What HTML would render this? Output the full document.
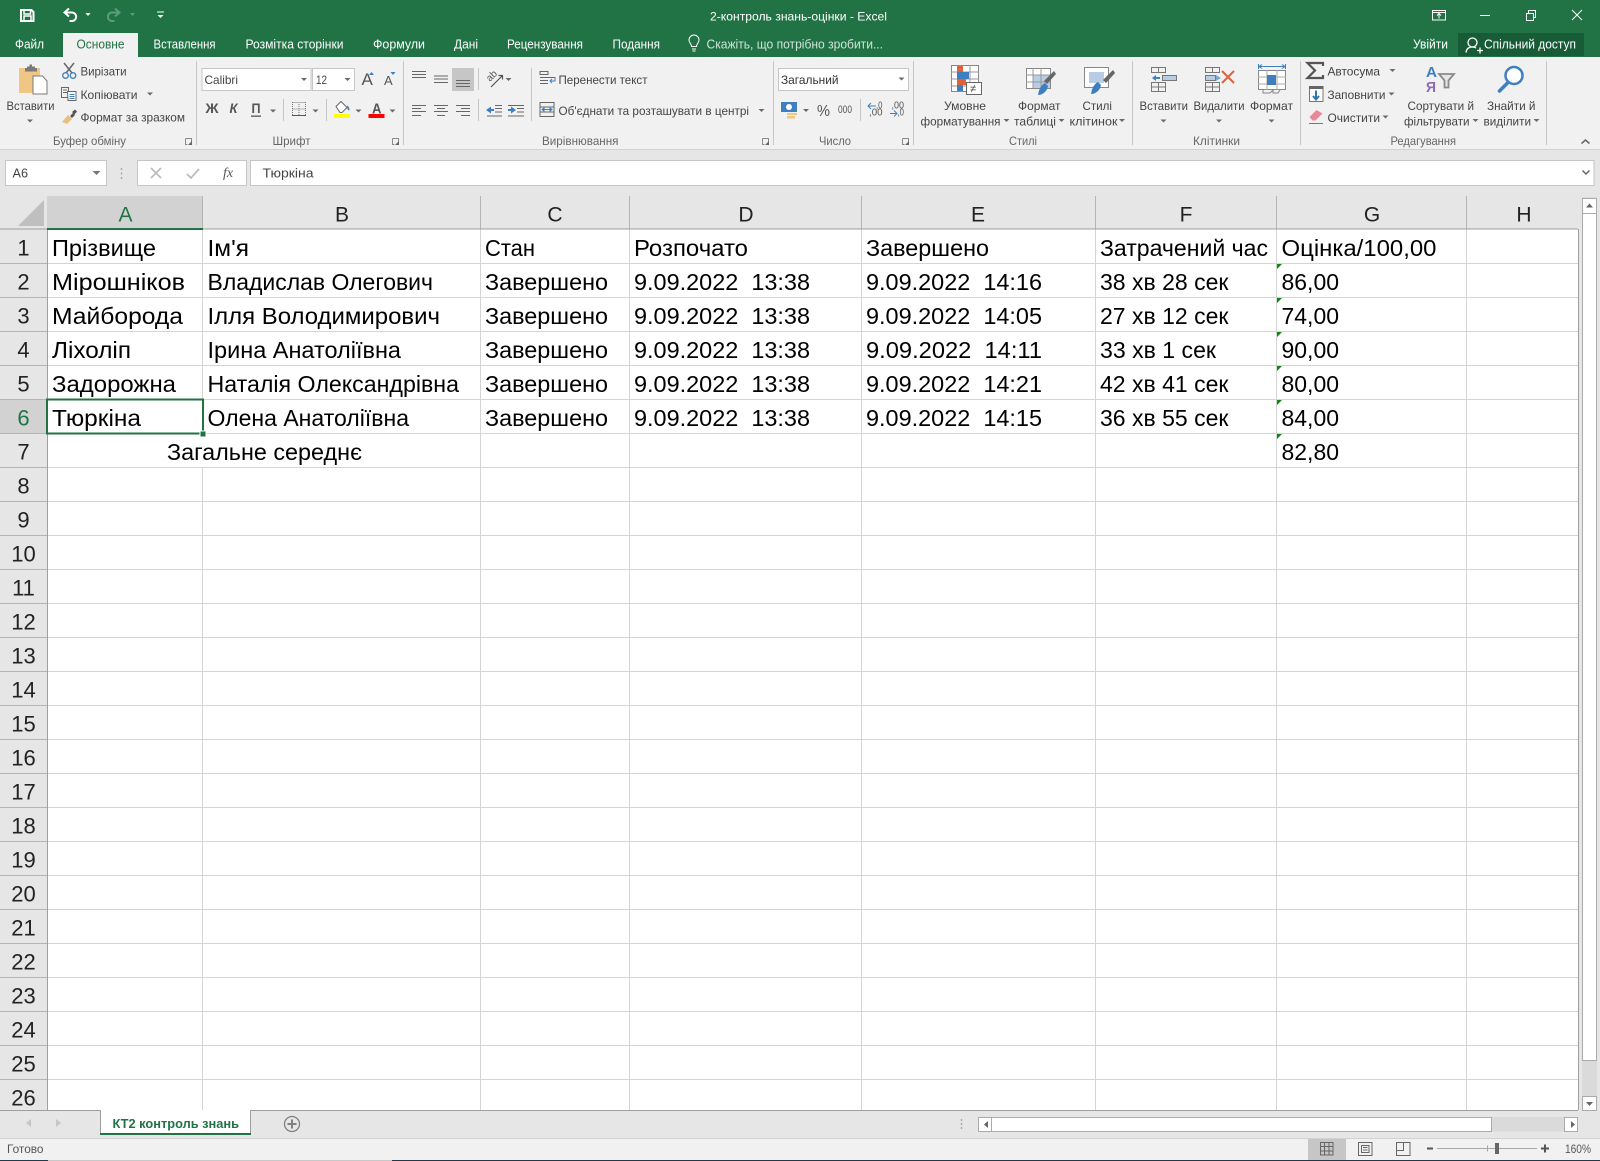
<!DOCTYPE html>
<html lang="uk"><head><meta charset="utf-8"><title>2-контроль знань-оцінки - Excel</title>
<style>
html,body{margin:0;padding:0;background:#fff}
svg{display:block}
text{font-family:"Liberation Sans","DejaVu Sans",sans-serif;font-size:12px;fill:#444}
.t{font-size:12.5px;fill:#fff}
.g{font-size:12px;fill:#666}
.c{font-size:23px;fill:#000}
.h{font-size:21px;fill:#222;text-anchor:middle}
.r{font-size:22px;fill:#222;text-anchor:middle}
</style></head><body>
<svg xmlns="http://www.w3.org/2000/svg" width="1600" height="1161" viewBox="0 0 1600 1161">
<defs><path id="a" d="M-3-1.500h6l-3 3z" fill="#6a6a6a"/><path id="l" d="M0 0h6v6h-2M0 0v6h2" fill="none"/></defs>
<!-- backgrounds -->
<rect width="1600" height="1161" fill="#e6e6e6"/>
<rect width="1600" height="57" fill="#217346"/>
<rect y="57" width="1600" height="92" fill="#f1f1f1"/>
<rect y="149" width="1600" height="1" fill="#d2d2d2"/>
<rect x="63" y="33" width="75" height="24" fill="#f1f1f1"/>
<rect x="1458" y="33" width="126" height="23" fill="#185c37"/>

<!-- quick access -->
<g fill="none" stroke="#fff" stroke-width="2">
<path d="M21 10h10.500l2 2v9h-12.500z"/><path d="M24 10v4h6.500v-4" stroke-width="1.500"/><path d="M24 21v-5h7v5" stroke-width="1.500"/>
<path d="M65 12.500h7.500a4.300 4.300 0 0 1 0 8.500h-3"/><path d="M69 8.500l-4.500 4 4.500 4"/>
<g stroke="#5c9c7b"><path d="M119 12.500h-7.500a4.300 4.300 0 0 0 0 8.500h3"/><path d="M115 8.500l4.500 4-4.500 4"/></g>
<path d="M157 12h7" stroke-width="1"/>
</g>
<path d="M85.500 13h5l-2.500 3z M157.500 15h6l-3 3z" fill="#fff"/><path d="M130 13h5l-2.500 3z" fill="#5c9c7b"/>
<text x="710" y="20.700" textLength="177" lengthAdjust="spacingAndGlyphs" style="fill:#fff">2-контроль знань-оцінки - Excel</text>
<!-- window buttons -->
<g fill="none" stroke="#fff" stroke-width="1">
<path d="M1432.500 10.500h13v9.500h-13zM1432.500 12.500h13M1439 18.500v-4.500M1437 15.500l2-2 2 2"/>
<path d="M1480 15.500h10"/>
<path d="M1526.500 13.500h7v7h-7zM1528.500 13v-2.500h7v7h-2"/>
<path d="M1572 10l10 10M1582 10l-10 10"/>
</g>
<!-- tabs -->
<text class="t" x="15" y="48.500" textLength="29" lengthAdjust="spacingAndGlyphs">Файл</text>
<text class="t" x="76.500" y="48.500" textLength="48" lengthAdjust="spacingAndGlyphs" style="fill:#217346">Основне</text>
<text class="t" x="153.500" y="48.500" textLength="62" lengthAdjust="spacingAndGlyphs">Вставлення</text>
<text class="t" x="245.500" y="48.500" textLength="98" lengthAdjust="spacingAndGlyphs">Розмітка сторінки</text>
<text class="t" x="373" y="48.500" textLength="52" lengthAdjust="spacingAndGlyphs">Формули</text>
<text class="t" x="454" y="48.500" textLength="24" lengthAdjust="spacingAndGlyphs">Дані</text>
<text class="t" x="507" y="48.500" textLength="76" lengthAdjust="spacingAndGlyphs">Рецензування</text>
<text class="t" x="612.500" y="48.500" textLength="47.500" lengthAdjust="spacingAndGlyphs">Подання</text>
<path d="M691.500 46.500c0-3-2.500-3.500-2.500-6.500a5 5 0 0 1 10 0c0 3-2.500 3.500-2.500 6.500zM692 49h4M692.500 51h3" fill="none" stroke="#fff"/>
<text class="t" x="706.500" y="48.500" textLength="176.500" lengthAdjust="spacingAndGlyphs" style="fill:#cfe3d8">Скажіть, що потрібно зробити...</text>
<text class="t" x="1413" y="48.500" textLength="35" lengthAdjust="spacingAndGlyphs">Увійти</text>
<g fill="none" stroke="#fff" stroke-width="1.300"><circle cx="1472.500" cy="42.500" r="4.500"/><path d="M1466 52.500c.5-4 3-5.500 6.500-5.500 1.500 0 2.500.3 3.500 1M1477 50.500h6M1480 47.500v6"/></g>
<text class="t" x="1484" y="48.500" textLength="92" lengthAdjust="spacingAndGlyphs">Спільний доступ</text>

<!-- ribbon separators -->
<path d="M196.500 61v84M403.500 61v84M773.500 61v84M913.500 61v84M1132.500 61v84M1300.500 61v84M1546.500 61v84M531.500 68v53M478.500 68v22M478.500 99v22M283.500 99v22M326.500 99v22M860.500 99v22" stroke="#c6c6c6" fill="none"/>
<!-- group labels -->
<text class="g" x="53" y="145" textLength="73" lengthAdjust="spacingAndGlyphs">Буфер обміну</text>
<text class="g" x="272.500" y="145" textLength="38" lengthAdjust="spacingAndGlyphs">Шрифт</text>
<text class="g" x="542" y="145" textLength="76.500" lengthAdjust="spacingAndGlyphs">Вирівнювання</text>
<text class="g" x="819" y="145" textLength="32" lengthAdjust="spacingAndGlyphs">Число</text>
<text class="g" x="1009" y="145" textLength="28" lengthAdjust="spacingAndGlyphs">Стилі</text>
<text class="g" x="1193" y="145" textLength="47" lengthAdjust="spacingAndGlyphs">Клітинки</text>
<text class="g" x="1390.500" y="145" textLength="65.500" lengthAdjust="spacingAndGlyphs">Редагування</text>
<g stroke="#8a8a8a" stroke-width="1"><use href="#l" x="185.500" y="138.500"/><use href="#l" x="392.500" y="138.500"/><use href="#l" x="762.500" y="138.500"/><use href="#l" x="902.500" y="138.500"/></g>
<path d="M188 145l4-4v4zM395 145l4-4v4zM765 145l4-4v4zM905 145l4-4v4z" fill="#666"/>

<!-- clipboard -->
<path d="M19 68h21v25h-21z" fill="#efc683"/><path d="M27 68v-1.500h2.500v-2h2.500v2h3v1.500h2v3.500h-12v-3.500z" fill="#7a7a7a"/>
<path d="M33 76h9.500l4.500 5v13h-14z" fill="#fff" stroke="#7a7a7a"/>
<text x="6.500" y="110" textLength="48" lengthAdjust="spacingAndGlyphs">Вставити</text><use href="#a" x="30" y="121"/>
<g fill="none"><path d="M64 63l8 10M74 63l-8 10" stroke="#666" stroke-width="1.500"/><circle cx="65.500" cy="75.500" r="2.800" stroke="#3f7fbf" stroke-width="1.300"/><circle cx="73" cy="75.500" r="2.800" stroke="#3f7fbf" stroke-width="1.300"/></g>
<text x="80.500" y="75.500" textLength="46" lengthAdjust="spacingAndGlyphs">Вирізати</text>
<g fill="none" stroke="#666"><path d="M61.500 87.500h7v10h-7zM63 90h4M63 92.500h4"/><path d="M67.500 91.500h8.500v9h-8z" fill="#fff"/><path d="M69.500 94.500h5M69.500 96.500h5M69.500 98.500h5" stroke="#3f7fbf"/></g>
<text x="80.500" y="99" textLength="57" lengthAdjust="spacingAndGlyphs">Копіювати</text><use href="#a" x="150" y="94"/>
<path d="M70 116l3-3 2 2-3 3z M72 112l3-2.500 2 2-2.500 3z" fill="#555"/><path d="M62 122l6-7 4 4-5 5z" fill="#e9bf80"/>
<text x="80.500" y="121.500" textLength="104.500" lengthAdjust="spacingAndGlyphs">Формат за зразком</text>

<!-- font -->
<rect x="202" y="68.500" width="109" height="22" fill="#fff" stroke="#c6c6c6"/><rect x="312.500" y="68.500" width="42" height="22" fill="#fff" stroke="#c6c6c6"/>
<text x="204.500" y="84" textLength="33.500" lengthAdjust="spacingAndGlyphs">Calibri</text><use href="#a" x="304" y="79.500"/>
<text x="316" y="84" textLength="11" lengthAdjust="spacingAndGlyphs">12</text><use href="#a" x="347.500" y="79.500"/>
<text x="361.500" y="85" style="font-size:17px;fill:#555">A</text><path d="M369 75l2.500-3 2.500 3z" fill="#3f7fbf"/>
<text x="384" y="85" style="font-size:13px;fill:#555">A</text><path d="M390.500 72l2.500 3 2.500-3z" fill="#3f7fbf"/>
<text x="205.500" y="113" textLength="13" lengthAdjust="spacingAndGlyphs" style="font-weight:bold;font-size:14px;fill:#555">Ж</text>
<text x="229.500" y="113" textLength="8" lengthAdjust="spacingAndGlyphs" style="font-weight:bold;font-style:italic;font-size:14px;fill:#555">К</text>
<text x="251.500" y="113" textLength="9" lengthAdjust="spacingAndGlyphs" style="font-weight:bold;font-size:14px;fill:#555">П</text><rect x="251" y="115.500" width="10" height="1.300" fill="#555"/>
<use href="#a" x="273" y="111"/><path d="M292.500 102.500h13M292.500 109h13M292.500 115.500h13M292.500 102v13M299 102v13M305.500 102v13" stroke="#777" stroke-dasharray="1 1" fill="none"/><path d="M292 115.500h14" stroke="#555"/><use href="#a" x="315.500" y="111"/>
<path d="M336 106.500l5-5 6 6-5 5h-2z" fill="#fff" stroke="#666"/><path d="M347 105.500c2 1 2.500 3 2.500 5-1.500 0-2.500-1.500-2.500-5z" fill="#3f7fbf"/><rect x="334" y="114" width="16" height="4" fill="#ffff00"/><use href="#a" x="358.500" y="111"/>
<text x="372" y="113.300" textLength="9.500" lengthAdjust="spacingAndGlyphs" style="font-size:15px;font-weight:bold;fill:#555">A</text><rect x="368.500" y="114" width="16" height="4" fill="#ff0000"/><use href="#a" x="392.500" y="111"/>

<!-- alignment -->
<rect x="452" y="68" width="22" height="23" fill="#c6c6c6"/>
<path d="M412 71.500h14M412 74.500h14M412 77.500h14M434 76h14M434 79h14M434 82.500h14M456 80.500h14M456 83.500h14M456 86.500h14
M412 105.500h14M412 108.500h9M412 111.500h14M412 115.500h9M434 105.500h14M437 108.500h8M434 111.500h14M437 115.500h8M456 105.500h14M461 108.500h9M456 111.500h14M461 115.500h9" stroke="#666" fill="none"/>
<text transform="translate(490 82) rotate(-45)" textLength="11" lengthAdjust="spacingAndGlyphs" style="font-size:10px;fill:#555">ab</text><path d="M491 87l11-11M498.500 75.500h4v4" fill="none" stroke="#555" stroke-width="1.200"/><use href="#a" x="508.500" y="79.500"/>
<path d="M495 105.500h7M495 108.500h7M495 112h7M487 116h15M508 105.500h16M517 108.500h7M517 112h7M508 116h16" stroke="#666" fill="none"/><path d="M486 110l5-3.500v2.500h3v2h-3v2.500zM516 110l-5-3.500v2.500h-3v2h3v2.500z" fill="#3f7fbf"/>
<path d="M540 71.500h8v3h-8zM540 77.500h15M540 80.500h8M540 83.500h8" fill="none" stroke="#666"/><path d="M555 77v4h-4M552 79l-2 2 2 2" fill="none" stroke="#3f7fbf"/>
<text x="558.500" y="84" textLength="89" lengthAdjust="spacingAndGlyphs">Перенести текст</text>
<path d="M540 102.500h14v14h-14zM540 107h14M540 112h14" fill="#f1f1f1" stroke="#666"/><path d="M542 109.500h10M542 109.500l2-1.500v3zM552 109.500l-2-1.500v3z" stroke="#3f7fbf" fill="#3f7fbf"/>
<text x="558.500" y="115" textLength="190.500" lengthAdjust="spacingAndGlyphs">Об'єднати та розташувати в центрі</text><use href="#a" x="761.500" y="110.500"/>

<!-- number -->
<rect x="778.500" y="68.500" width="130" height="22" fill="#fff" stroke="#c6c6c6"/>
<text x="781" y="84" textLength="57.500" lengthAdjust="spacingAndGlyphs" style="fill:#333">Загальний</text><use href="#a" x="901.500" y="79"/>
<rect x="781" y="102" width="16" height="10" fill="#3f7fbf"/><circle cx="789" cy="107" r="3" fill="#fff"/><path d="M787 113h10v2h-10zM787 116h8v2.500h-8z" fill="#efc683"/><use href="#a" x="806" y="110.500"/>
<text x="817" y="116" textLength="13" lengthAdjust="spacingAndGlyphs" style="font-size:16px;fill:#555">%</text>
<text x="838" y="113" textLength="14" lengthAdjust="spacingAndGlyphs" style="font-size:11px;fill:#555">000</text>
<text x="876" y="108.300" textLength="6.500" lengthAdjust="spacingAndGlyphs" style="font-size:10.500px;fill:#555">,0</text><text x="869" y="115.700" textLength="13.500" lengthAdjust="spacingAndGlyphs" style="font-size:10.500px;fill:#555">,00</text><path d="M868 106h8M871 103l-3 3 3 3" stroke="#3f7fbf" fill="none"/>
<text x="891.500" y="108.300" textLength="12.500" lengthAdjust="spacingAndGlyphs" style="font-size:10.500px;fill:#555">,00</text><text x="897.500" y="115.700" textLength="6.500" lengthAdjust="spacingAndGlyphs" style="font-size:10.500px;fill:#555">,0</text><path d="M890 113.500h7M894 110.500l3 3-3 3" stroke="#3f7fbf" fill="none"/>

<!-- styles -->
<rect x="951.500" y="65.500" width="27" height="26" fill="#fff" stroke="#888"/><path d="M951 72h28M951 79h28M951 86h28M960 65v27M970 65v27" stroke="#999" fill="none"/><rect x="957" y="66" width="6" height="6" fill="#e0623a"/><rect x="957" y="72" width="12" height="7" fill="#3f7fbf"/><rect x="957" y="79" width="9" height="6" fill="#e0623a"/><rect x="957" y="85" width="6" height="6" fill="#3f7fbf"/>
<rect x="966.500" y="82.500" width="15" height="12" fill="#fff" stroke="#666"/><text x="970" y="92" style="font-size:11px;fill:#444">≠</text>
<text x="944" y="110" textLength="42" lengthAdjust="spacingAndGlyphs">Умовне</text><text x="920.500" y="125.500" textLength="80" lengthAdjust="spacingAndGlyphs">форматування</text><use href="#a" x="1006.500" y="120.500"/>
<rect x="1026.500" y="68.500" width="24" height="20" fill="#fff" stroke="#888"/><rect x="1033" y="75" width="17" height="13" fill="#b8cde3"/><path d="M1026 75h24M1026 82h24M1033 68v20M1041 68v20" stroke="#999" fill="none"/><path d="M1054 71l2 3-9 10-3-3z" fill="#666"/><path d="M1038 95c1-6 3-10 7-12l3 3c-1 6-6 9-10 9z" fill="#3f7fbf"/>
<text x="1018" y="110" textLength="42.500" lengthAdjust="spacingAndGlyphs">Формат</text><text x="1014" y="125.500" textLength="42" lengthAdjust="spacingAndGlyphs">таблиці</text><use href="#a" x="1061.500" y="120.500"/>
<rect x="1084.500" y="67.500" width="24" height="20" fill="#fff" stroke="#888"/><rect x="1089" y="72" width="15" height="11" fill="#b8cde3"/><path d="M1113 70l2 3-9 10-3-3z" fill="#666"/><path d="M1091 94c1-6 3-10 7-12l3 3c-1 6-6 9-10 9z" fill="#3f7fbf"/>
<text x="1082.500" y="110" textLength="29.500" lengthAdjust="spacingAndGlyphs">Стилі</text><text x="1069.500" y="125.500" textLength="48" lengthAdjust="spacingAndGlyphs">клітинок</text><use href="#a" x="1122" y="120.500"/>

<!-- cells -->
<path d="M1151.500 67.500h14v5h-14zM1158.500 67v5M1151.500 82.500h14v9h-14zM1151.500 87h14M1158.500 82v9" fill="none" stroke="#777"/><rect x="1162.500" y="75.500" width="14" height="5" fill="#b8cde3" stroke="#777"/><path d="M1152 78l4-3v2h4v2h-4v2z" fill="#3f7fbf"/>
<text x="1139.500" y="110" textLength="48.500" lengthAdjust="spacingAndGlyphs">Вставити</text><use href="#a" x="1163.500" y="121"/>
<path d="M1205.500 67.500h14v5h-14zM1212.500 67v5M1205.500 82.500h14v9h-14zM1205.500 87h14M1212.500 82v9" fill="none" stroke="#777"/><rect x="1205.500" y="75.500" width="10" height="5" fill="#b8cde3" stroke="#777"/><path d="M1216 75l5 3-5 3z" fill="#7fa8d0"/><path d="M1222 71l12 12M1234 71l-12 12" stroke="#e0623a" stroke-width="2"/>
<text x="1193.500" y="110" textLength="51" lengthAdjust="spacingAndGlyphs">Видалити</text><use href="#a" x="1219" y="121"/>
<path d="M1258.500 66.500h27M1258.500 64v5M1285.500 64v5M1262 64.500l-3 2 3 2M1282 64.500l3 2-3 2" stroke="#3f7fbf" fill="none"/>
<rect x="1258.500" y="70.500" width="27" height="19" fill="#fff" stroke="#888"/><path d="M1258 77h28M1258 84h28M1267 70v20M1277 70v20" stroke="#aaa" fill="none"/><rect x="1267" y="75" width="9" height="10" fill="#3f7fbf"/><path d="M1263 90v3h7l3-3M1273 90v3h5l2-3" fill="none" stroke="#888"/>
<text x="1250" y="110" textLength="43" lengthAdjust="spacingAndGlyphs">Формат</text><use href="#a" x="1271.500" y="121"/>

<!-- editing -->
<path d="M1323 66v-3h-15.500l7.500 7.500-7.500 7.500h15.500v-3" fill="none" stroke="#555" stroke-width="2.200"/>
<text x="1327.500" y="75.500" textLength="52.500" lengthAdjust="spacingAndGlyphs">Автосума</text><use href="#a" x="1392.500" y="70.500"/>
<rect x="1309.500" y="86.500" width="13.500" height="15" fill="#fff" stroke="#777"/><rect x="1309" y="86" width="14.500" height="3" fill="#666"/><path d="M1316 90.500v8.500M1313 96l3 3.500 3-3.500" stroke="#2e75b5" stroke-width="2" fill="none"/>
<text x="1327.500" y="99" textLength="58" lengthAdjust="spacingAndGlyphs">Заповнити</text><use href="#a" x="1391.500" y="94"/>
<path d="M1309.500 117l7-7 6 3.500-7 7h-3z" fill="#e8899a"/><path d="M1309 123.500h14" stroke="#777"/>
<text x="1327.500" y="122" textLength="52.500" lengthAdjust="spacingAndGlyphs">Очистити</text><use href="#a" x="1385.500" y="117"/>
<text x="1426" y="77" textLength="11" lengthAdjust="spacingAndGlyphs" style="font-size:15px;font-weight:bold;fill:#3f7fbf">A</text>
<text x="1426" y="92" textLength="10" lengthAdjust="spacingAndGlyphs" style="font-size:15px;font-weight:bold;fill:#8e6ab5">Я</text>
<path d="M1439 74h15l-5.500 6.500v7h-4v-7z" fill="#e6e6e6" stroke="#8a8a8a" stroke-width="1.800"/>
<text x="1407.500" y="110" textLength="66.500" lengthAdjust="spacingAndGlyphs">Сортувати й</text><text x="1404" y="125.500" textLength="65.500" lengthAdjust="spacingAndGlyphs">фільтрувати</text><use href="#a" x="1475.500" y="120.500"/>
<circle cx="1514" cy="75.500" r="8.500" fill="#fff" stroke="#3f7fbf" stroke-width="2.500"/><path d="M1507.500 83l-8 8" stroke="#3f7fbf" stroke-width="3.500" stroke-linecap="round"/>
<text x="1487" y="110" textLength="48.500" lengthAdjust="spacingAndGlyphs">Знайти й</text><text x="1483.500" y="125.500" textLength="47.500" lengthAdjust="spacingAndGlyphs">виділити</text><use href="#a" x="1536.500" y="120.500"/>
<path d="M1581.500 143.500l4-3.500 4 3.500" fill="none" stroke="#666" stroke-width="1.500"/>

<!-- formula bar -->
<rect x="5.500" y="160.500" width="101" height="25" fill="#fff" stroke="#c6c6c6"/>
<text x="12.500" y="177.700" textLength="15.500" lengthAdjust="spacingAndGlyphs" style="font-size:13px">A6</text>
<path d="M92.500 171h8l-4 4z" fill="#777"/>
<path d="M121.500 168v2M121.500 172.500v2M121.500 177v2" stroke="#aaa" stroke-width="1.500"/>
<rect x="137.500" y="160.500" width="109" height="25" fill="#fff" stroke="#c6c6c6"/>
<path d="M151 168l10 10M161 168l-10 10M187 174l4 4 8-9" fill="none" stroke="#bdbdbd" stroke-width="1.800"/>
<text x="223" y="177" style="font-family:'Liberation Serif',serif;font-style:italic;font-size:14px;fill:#555">fx</text>
<rect x="250.500" y="160.500" width="1343.500" height="25" fill="#fff" stroke="#c6c6c6"/>
<text x="262.500" y="177.700" textLength="51" lengthAdjust="spacingAndGlyphs" style="font-size:13px">Тюркіна</text>
<path d="M1582.500 170.500l3.500 3.500 3.500-3.500" fill="none" stroke="#666" stroke-width="1.500"/>

<!-- sheet -->
<rect x="47" y="229" width="1531" height="881" fill="#fff"/>
<rect x="47" y="196" width="156" height="33" fill="#d2d2d2"/>
<rect x="0" y="399" width="47" height="34" fill="#d2d2d2"/>
<path d="M44 200v26h-26z" fill="#bfbfbf"/>
<path d="M202.500 229V433M202.500 467V1110M480.500 229V1110M629.500 229V1110M861.500 229V1110M1095.500 229V1110M1276.500 229V1110M1466.500 229V1110" stroke="#d4d4d4"/>
<path d="M47 263.500H1578M47 297.500H1578M47 331.500H1578M47 365.500H1578M47 399.500H1578M47 433.500H1578M47 467.500H1578M47 501.500H1578M47 535.500H1578M47 569.500H1578M47 603.500H1578M47 637.500H1578M47 671.500H1578M47 705.500H1578M47 739.500H1578M47 773.500H1578M47 807.500H1578M47 841.500H1578M47 875.500H1578M47 909.500H1578M47 943.500H1578M47 977.500H1578M47 1011.500H1578M47 1045.500H1578M47 1079.500H1578" stroke="#d4d4d4"/>
<path d="M202.500 196V229M480.500 196V229M629.500 196V229M861.500 196V229M1095.500 196V229M1276.500 196V229M1466.500 196V229" stroke="#b4b4b4"/>
<path d="M0 263.500H47M0 297.500H47M0 331.500H47M0 365.500H47M0 399.500H47M0 433.500H47M0 467.500H47M0 501.500H47M0 535.500H47M0 569.500H47M0 603.500H47M0 637.500H47M0 671.500H47M0 705.500H47M0 739.500H47M0 773.500H47M0 807.500H47M0 841.500H47M0 875.500H47M0 909.500H47M0 943.500H47M0 977.500H47M0 1011.500H47M0 1045.500H47M0 1079.500H47" stroke="#b4b4b4"/>
<path d="M0 229H1578M47.500 229V1110M1578.500 229V1110M0 1110.500H1578" stroke="#9f9f9f"/>
<rect x="47" y="228" width="156" height="2" fill="#217346"/>
<!-- col headers -->
<text class="h" x="125.500" y="221.500" style="fill:#217346">A</text><text class="h" x="342" y="221.500">B</text><text class="h" x="555" y="221.500">C</text><text class="h" x="746" y="221.500">D</text><text class="h" x="978" y="221.500">E</text><text class="h" x="1186" y="221.500">F</text><text class="h" x="1372" y="221.500">G</text><text class="h" x="1524" y="221.500">H</text>
<!-- row headers -->
<text class="r" x="23.500" y="255.500">1</text><text class="r" x="23.500" y="289.500">2</text><text class="r" x="23.500" y="323.500">3</text><text class="r" x="23.500" y="357.500">4</text><text class="r" x="23.500" y="391.500">5</text><text class="r" x="23.500" y="425.500" style="fill:#217346">6</text><text class="r" x="23.500" y="459.500">7</text><text class="r" x="23.500" y="493.500">8</text><text class="r" x="23.500" y="527.500">9</text><text class="r" x="23.500" y="561.500">10</text><text class="r" x="23.500" y="595.500">11</text><text class="r" x="23.500" y="629.500">12</text><text class="r" x="23.500" y="663.500">13</text><text class="r" x="23.500" y="697.500">14</text><text class="r" x="23.500" y="731.500">15</text><text class="r" x="23.500" y="765.500">16</text><text class="r" x="23.500" y="799.500">17</text><text class="r" x="23.500" y="833.500">18</text><text class="r" x="23.500" y="867.500">19</text><text class="r" x="23.500" y="901.500">20</text><text class="r" x="23.500" y="935.500">21</text><text class="r" x="23.500" y="969.500">22</text><text class="r" x="23.500" y="1003.500">23</text><text class="r" x="23.500" y="1037.500">24</text><text class="r" x="23.500" y="1071.500">25</text><text class="r" x="23.500" y="1105.500">26</text>
<!-- cell data -->
<g>
<text class="c" x="52" y="256" textLength="104" lengthAdjust="spacingAndGlyphs">Прізвище</text>
<text class="c" x="207.500" y="256" textLength="41.500" lengthAdjust="spacingAndGlyphs">Ім'я</text>
<text class="c" x="485" y="256" textLength="50" lengthAdjust="spacingAndGlyphs">Стан</text>
<text class="c" x="634" y="256" textLength="114" lengthAdjust="spacingAndGlyphs">Розпочато</text>
<text class="c" x="866" y="256" textLength="123" lengthAdjust="spacingAndGlyphs">Завершено</text>
<text class="c" x="1100" y="256" textLength="168" lengthAdjust="spacingAndGlyphs">Затрачений час</text>
<text class="c" x="1281.500" y="256" textLength="155" lengthAdjust="spacingAndGlyphs">Оцінка/100,00</text>

<text class="c" x="52" y="290" textLength="133" lengthAdjust="spacingAndGlyphs">Мірошніков</text>
<text class="c" x="207.500" y="290" textLength="225.500" lengthAdjust="spacingAndGlyphs">Владислав Олегович</text>
<text class="c" x="485" y="290" textLength="123" lengthAdjust="spacingAndGlyphs">Завершено</text>
<text class="c" x="634" y="290" textLength="176" lengthAdjust="spacingAndGlyphs" xml:space="preserve">9.09.2022  13:38</text>
<text class="c" x="866" y="290" textLength="176" lengthAdjust="spacingAndGlyphs" xml:space="preserve">9.09.2022  14:16</text>
<text class="c" x="1100" y="290" textLength="128.500" lengthAdjust="spacingAndGlyphs">38 хв 28 сек</text>
<text class="c" x="1281.500" y="290" textLength="57.500" lengthAdjust="spacingAndGlyphs">86,00</text>

<text class="c" x="52" y="324" textLength="131" lengthAdjust="spacingAndGlyphs">Майборода</text>
<text class="c" x="207.500" y="324" textLength="232.500" lengthAdjust="spacingAndGlyphs">Ілля Володимирович</text>
<text class="c" x="485" y="324" textLength="123" lengthAdjust="spacingAndGlyphs">Завершено</text>
<text class="c" x="634" y="324" textLength="176" lengthAdjust="spacingAndGlyphs" xml:space="preserve">9.09.2022  13:38</text>
<text class="c" x="866" y="324" textLength="176" lengthAdjust="spacingAndGlyphs" xml:space="preserve">9.09.2022  14:05</text>
<text class="c" x="1100" y="324" textLength="128.500" lengthAdjust="spacingAndGlyphs">27 хв 12 сек</text>
<text class="c" x="1281.500" y="324" textLength="57.500" lengthAdjust="spacingAndGlyphs">74,00</text>

<text class="c" x="52" y="358" textLength="79" lengthAdjust="spacingAndGlyphs">Ліхоліп</text>
<text class="c" x="207.500" y="358" textLength="193.500" lengthAdjust="spacingAndGlyphs">Ірина Анатоліївна</text>
<text class="c" x="485" y="358" textLength="123" lengthAdjust="spacingAndGlyphs">Завершено</text>
<text class="c" x="634" y="358" textLength="176" lengthAdjust="spacingAndGlyphs" xml:space="preserve">9.09.2022  13:38</text>
<text class="c" x="866" y="358" textLength="176" lengthAdjust="spacingAndGlyphs" xml:space="preserve">9.09.2022  14:11</text>
<text class="c" x="1100" y="358" textLength="116" lengthAdjust="spacingAndGlyphs">33 хв 1 сек</text>
<text class="c" x="1281.500" y="358" textLength="57.500" lengthAdjust="spacingAndGlyphs">90,00</text>

<text class="c" x="52" y="392" textLength="124" lengthAdjust="spacingAndGlyphs">Задорожна</text>
<text class="c" x="207.500" y="392" textLength="251.500" lengthAdjust="spacingAndGlyphs">Наталія Олександрівна</text>
<text class="c" x="485" y="392" textLength="123" lengthAdjust="spacingAndGlyphs">Завершено</text>
<text class="c" x="634" y="392" textLength="176" lengthAdjust="spacingAndGlyphs" xml:space="preserve">9.09.2022  13:38</text>
<text class="c" x="866" y="392" textLength="176" lengthAdjust="spacingAndGlyphs" xml:space="preserve">9.09.2022  14:21</text>
<text class="c" x="1100" y="392" textLength="128.500" lengthAdjust="spacingAndGlyphs">42 хв 41 сек</text>
<text class="c" x="1281.500" y="392" textLength="57.500" lengthAdjust="spacingAndGlyphs">80,00</text>

<text class="c" x="52" y="426" textLength="89" lengthAdjust="spacingAndGlyphs">Тюркіна</text>
<text class="c" x="207.500" y="426" textLength="201.500" lengthAdjust="spacingAndGlyphs">Олена Анатоліївна</text>
<text class="c" x="485" y="426" textLength="123" lengthAdjust="spacingAndGlyphs">Завершено</text>
<text class="c" x="634" y="426" textLength="176" lengthAdjust="spacingAndGlyphs" xml:space="preserve">9.09.2022  13:38</text>
<text class="c" x="866" y="426" textLength="176" lengthAdjust="spacingAndGlyphs" xml:space="preserve">9.09.2022  14:15</text>
<text class="c" x="1100" y="426" textLength="128.500" lengthAdjust="spacingAndGlyphs">36 хв 55 сек</text>
<text class="c" x="1281.500" y="426" textLength="57.500" lengthAdjust="spacingAndGlyphs">84,00</text>

<text class="c" x="167" y="460" textLength="195" lengthAdjust="spacingAndGlyphs">Загальне середнє</text>
<text class="c" x="1281.500" y="460" textLength="57.500" lengthAdjust="spacingAndGlyphs">82,80</text>
</g>
<path d="M1277 264h5l-5 5zM1277 298h5l-5 5zM1277 332h5l-5 5zM1277 366h5l-5 5zM1277 400h5l-5 5zM1277 434h5l-5 5z" fill="#0a8a0a"/>
<!-- selection -->
<rect x="47" y="399.500" width="156" height="34" fill="none" stroke="#217346" stroke-width="2"/>
<rect x="200" y="431" width="6" height="6" fill="#217346" stroke="#fff"/>

<!-- vertical scrollbar -->
<rect x="1582" y="197" width="15" height="913" fill="#dadada"/>
<rect x="1582.500" y="213.500" width="14" height="847" fill="#fff" stroke="#ababab"/>
<rect x="1582.500" y="198.500" width="14" height="15" fill="#fff" stroke="#ababab"/><path d="M1586 207.500h7l-3.500-4z" fill="#666"/>
<rect x="1582.500" y="1096.500" width="14" height="14" fill="#fff" stroke="#ababab"/><path d="M1586 1102h7l-3.500 4z" fill="#666"/>

<!-- tab strip -->
<rect x="100" y="1110" width="151" height="24" fill="#fff"/>
<path d="M100.500 1110v24M250.500 1110v24" stroke="#9f9f9f"/><rect x="100" y="1133" width="151" height="2" fill="#217346"/>
<text x="112.500" y="1128" textLength="126.500" lengthAdjust="spacingAndGlyphs" style="font-weight:bold;font-size:13px;fill:#217346">КТ2 контроль знань</text>
<path d="M31 1119v8l-5-4zM56 1119v8l5-4z" fill="#c6c6c6"/>
<circle cx="292" cy="1124" r="7.500" fill="none" stroke="#808080" stroke-width="1.300"/><path d="M287.500 1124h9M292 1119.500v9" stroke="#808080" stroke-width="2"/>
<path d="M961.500 1119v2M961.500 1123v2M961.500 1127v2" stroke="#aaa" stroke-width="1.500"/>
<rect x="978" y="1117" width="586" height="14.500" fill="#dadada"/>
<rect x="978.500" y="1117.500" width="13" height="14" fill="#fff" stroke="#ababab"/><path d="M988 1121v7l-4-3.500z" fill="#666"/>
<rect x="991.500" y="1117.500" width="500" height="14" fill="#fff" stroke="#ababab"/>
<rect x="1564.500" y="1117.500" width="13" height="14" fill="#fff" stroke="#ababab"/><path d="M1571 1121v7l4-3.500z" fill="#666"/>

<!-- status bar -->
<rect y="1138" width="1600" height="22" fill="#f1f1f1"/><rect y="1138" width="1600" height="1" fill="#d2d2d2"/>
<rect y="1160" width="1600" height="1" fill="#c8c8c8"/><rect y="1160" width="48" height="1" fill="#1f3b4d"/><rect x="392" y="1160" width="1208" height="1" fill="#24384a"/>
<text x="7" y="1153" textLength="36.500" lengthAdjust="spacingAndGlyphs" style="fill:#555">Готово</text>
<rect x="1308" y="1139" width="38" height="21" fill="#c6c6c6"/>
<path d="M1320.500 1142.500h12.500v12.500h-12.500zM1320 1146.500h13M1320 1151h13M1324.500 1142v13M1329 1142v13" fill="none" stroke="#666"/>
<path d="M1358.500 1142.500h13.500v13h-13.500zM1361.500 1145.500h7.500v7h-7.500zM1363 1147.500h4.500M1363 1150h4.500" fill="none" stroke="#666"/>
<path d="M1396.500 1142.500h13.500v13h-13.500zM1396.500 1150.500h7v-8M1403.500 1142.500v8" fill="none" stroke="#666"/>
<path d="M1427 1148.500h6M1541 1148.500h8M1545 1144.500v8" stroke="#555" stroke-width="2"/>
<path d="M1437 1148.500h100M1487.500 1145.500v6" stroke="#a8a8a8"/><rect x="1495" y="1143" width="4" height="11" fill="#666"/>
<text x="1565" y="1153" textLength="26" lengthAdjust="spacingAndGlyphs" style="fill:#555">160%</text>
</svg>
</body></html>
